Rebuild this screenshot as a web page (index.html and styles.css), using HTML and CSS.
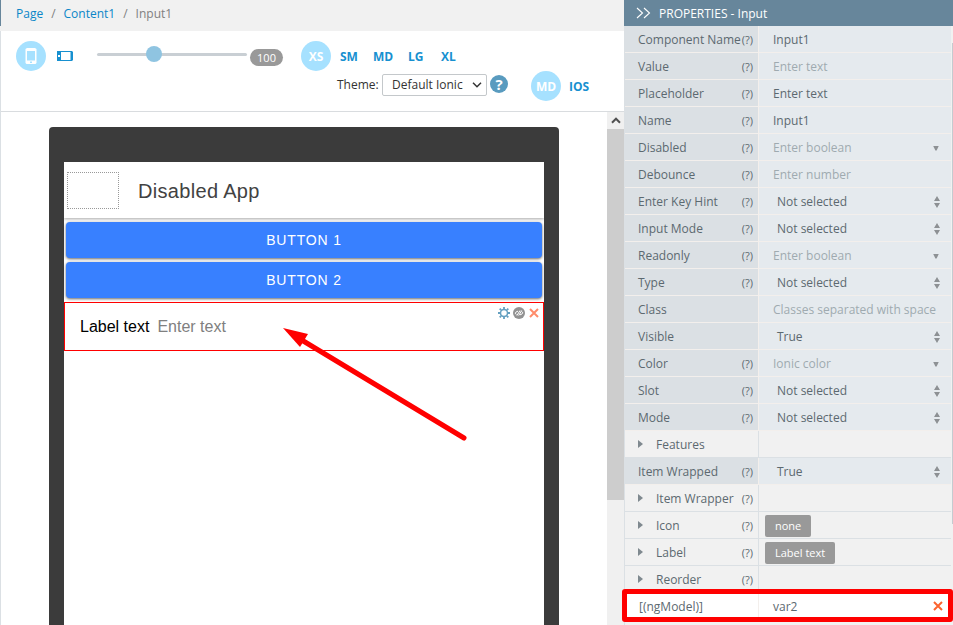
FILE: index.html
```html
<!DOCTYPE html>
<html lang="en">
<head>
    <meta charset="UTF-8">
    <meta name="viewport" content="width=device-width, initial-scale=1.0">
    <title>Input1</title>
    <link rel="stylesheet" href="styles.css">
</head>
<body>
    <div class="editor">
        <nav class="breadcrumb">
            <a href="#">Page</a><span class="sep">/</span><a href="#">Content1</a><span class="sep">/</span><span>Input1</span>
        </nav>
        <div class="toolbar">
            <div class="toolbar-row">
                <button class="circle">
                    <svg width="12" height="17" viewBox="0 0 12 17"><path fill="#fff" fill-rule="evenodd" d="M2 0h8l1.500 1v14l-1 1h-9l-1-1V1zM2 3v9.500h8v-9.500zM5 13.500v1.500h2v-1.500z"/></svg>
                </button>
                <button class="landscape">
                    <svg width="16" height="10" viewBox="0 0 16 10"><path fill="#1790d0" fill-rule="evenodd" d="M0 0h15l1 1v8l-1 1H0zM4 1v8h9.500V1zM1 4v2h2V4z"/></svg>
                </button>
                <div class="slider"><span class="thumb"></span></div>
                <span class="zoom-value">100</span>
                <button class="circle size-xs">XS</button>
                <div class="sizes"><span class="sm">SM</span><span class="md">MD</span><span class="lg">LG</span><span>XL</span></div>
            </div>
            <div class="toolbar-row theme-row">
                <label>Theme:</label>
                <div class="select">Default Ionic
                    <svg width="10" height="6" viewBox="0 0 10 6"><path d="M1 0.700l4 4 4-4" fill="none" stroke="#333" stroke-width="1.500"/></svg>
                </div>
                <span class="help">?</span>
                <button class="circle platform-md">MD</button>
                <span class="platform">IOS</span>
            </div>
        </div>
        <div class="workspace">
            <div class="stage">
                <div class="device">
                    <div class="screen">
                        <div class="app-header"><div class="slot"></div><span class="app-title">Disabled App</span></div>
                        <div class="app-content">
                            <div class="ion-button">BUTTON 1</div>
                            <div class="ion-button">BUTTON 2</div>
                            <div class="ion-item">
                                <span class="item-label">Label text</span><span class="item-input">Enter text</span>
                                <div class="item-tools">
                                    <svg width="12" height="12" viewBox="0 0 12 12"><g fill="none" stroke="#64a0c0"><circle cx="6" cy="6" r="3.500" stroke-width="1.500"/><path stroke-width="1.800" d="M6 0v2M6 10v2M0 6h2M10 6h2M1.700 1.700l1.500 1.500M8.800 8.800l1.500 1.500M10.300 1.700L8.800 3.200M3.200 8.800l-1.500 1.500"/></g></svg>
                                    <svg width="12" height="12" viewBox="0 0 12 12"><circle cx="6" cy="6" r="6" fill="#929292"/><path d="M5 4.200Q3 4.300 2.300 6.200q.3 1 1.200 1.500M7 7.800q2-.1 2.700-2-.3-1-1.200-1.500M4 8.500l3-5M5.700 8.500l3-5" fill="none" stroke="#fff" stroke-width="1"/></svg>
                                    <svg width="10" height="10" viewBox="0 0 10 10"><path d="M1 1l8 8M9 1L1 9" stroke="#ff8c6b" stroke-width="2"/></svg>
                                </div>
                            </div>
                        </div>
                    </div>
                </div>
            </div>
            <div class="scrollbar">
                <div class="scroll-up"><svg width="10" height="7" viewBox="0 0 10 7"><path d="M1 5.700l4-4 4 4" fill="none" stroke="#505050" stroke-width="2"/></svg></div>
                <div class="scroll-thumb"></div>
            </div>
        </div>
    </div>

    <aside class="properties">
        <div class="properties-header">
            <svg width="15" height="12" viewBox="0 0 15 12"><path d="M1 1l5.500 5L1 11M8 1l5.500 5L8 11" fill="none" stroke="#fff" stroke-width="1.100"/></svg>
            <span>PROPERTIES - Input</span>
        </div>
        <div class="properties-body">
            <div class="row"><div class="name">Component Name<i>(?)</i></div><div class="value">Input1</div></div>
            <div class="row"><div class="name">Value<i>(?)</i></div><div class="value empty">Enter text</div></div>
            <div class="row"><div class="name">Placeholder<i>(?)</i></div><div class="value">Enter text</div></div>
            <div class="row"><div class="name">Name<i>(?)</i></div><div class="value">Input1</div></div>
            <div class="row"><div class="name">Disabled<i>(?)</i></div><div class="value empty combo">Enter boolean</div></div>
            <div class="row"><div class="name">Debounce<i>(?)</i></div><div class="value empty">Enter number</div></div>
            <div class="row"><div class="name">Enter Key Hint<i>(?)</i></div><div class="value choice">Not selected</div></div>
            <div class="row"><div class="name">Input Mode<i>(?)</i></div><div class="value choice">Not selected</div></div>
            <div class="row"><div class="name">Readonly<i>(?)</i></div><div class="value empty combo">Enter boolean</div></div>
            <div class="row"><div class="name">Type<i>(?)</i></div><div class="value choice">Not selected</div></div>
            <div class="row"><div class="name">Class</div><div class="value empty">Classes separated with space</div></div>
            <div class="row"><div class="name">Visible</div><div class="value choice">True</div></div>
            <div class="row"><div class="name">Color<i>(?)</i></div><div class="value empty combo">Ionic color</div></div>
            <div class="row"><div class="name">Slot<i>(?)</i></div><div class="value choice">Not selected</div></div>
            <div class="row"><div class="name">Mode<i>(?)</i></div><div class="value choice">Not selected</div></div>
            <div class="row group"><div class="name">Features</div><div class="value"></div></div>
            <div class="row"><div class="name">Item Wrapped<i>(?)</i></div><div class="value choice">True</div></div>
            <div class="row group"><div class="name">Item Wrapper<i>(?)</i></div><div class="value"></div></div>
            <div class="row group"><div class="name">Icon<i>(?)</i></div><div class="value"><span class="tag">none</span></div></div>
            <div class="row group"><div class="name">Label<i>(?)</i></div><div class="value"><span class="tag">Label text</span></div></div>
            <div class="row group"><div class="name">Reorder<i>(?)</i></div><div class="value"></div></div>
            <div class="row binding"><div class="name">[(ngModel)]</div><div class="value">var2
                <svg width="10" height="10" viewBox="0 0 10 10"><path d="M1 1l8 8M9 1L1 9" stroke="#fb632f" stroke-width="2"/></svg>
            </div></div>
        </div>
        <div class="panel-scroll"></div>
    </aside>

    <svg class="arrow" width="186" height="118" viewBox="0 0 186 118">
        <path d="M17 11L181 110" stroke="#f00" stroke-width="5" stroke-linecap="round"/>
        <path d="M0 0L25 6L17 19Z" fill="#f00"/>
    </svg>
    <div class="highlight"></div>
</body>
</html>
```

FILE: styles.css
```css
* {
    box-sizing: border-box;
}
body {
    display: flex;
    height: 625px;
    margin: 0;
    overflow: hidden;
    font-family: "Open Sans", "Noto Sans", sans-serif;
    font-size: 12px;
    color: #5c6970;
    background: #fff;
}
button {
    padding: 0;
    border: 0;
    background: none;
    font: inherit;
}
svg {
    display: block;
    flex: none;
}

/* Editor */
.editor {
    width: 624px;
    height: 625px;
    display: flex;
    flex-direction: column;
    border-left: 1px solid #dbe0e4;
}
.breadcrumb {
    height: 31px;
    margin-left: -1px;
    padding: 0 16px;
    background: linear-gradient(#67869b, #67869b) 0 0 / 1px 26px no-repeat #f1f1f1;
    line-height: 27px;
    color: #808080;
}
.breadcrumb a {
    color: #0b86c8;
    text-decoration: none;
}
.sep {
    margin: 0 8px;
}
.toolbar {
    height: 81px;
    padding: 10px 15px 0;
    border-bottom: 1px solid #d9dcdf;
}
.toolbar-row {
    display: flex;
    align-items: center;
    height: 30px;
    font-weight: 700;
    color: #1790d0;
}
.circle {
    display: flex;
    align-items: center;
    justify-content: center;
    width: 30px;
    height: 30px;
    border-radius: 50%;
    background: #a6e1ff;
    color: #fff;
}
.landscape {
    margin: 0 24px 0 11px;
}
.slider {
    width: 150px;
    height: 3px;
    margin-bottom: 3px;
    border-radius: 2px;
    background: #c9cfd4;
}
.thumb {
    display: block;
    width: 16px;
    height: 16px;
    margin: -7px 0 0 49px;
    border-radius: 50%;
    background: #8fc4e1;
}
.zoom-value {
    width: 33px;
    height: 17px;
    margin: 3px 18px 0 3px;
    border-radius: 9px;
    background: #999;
    color: #fff;
    font-size: 11px;
    font-weight: 400;
    line-height: 18px;
    text-align: center;
}
.sizes {
    display: flex;
    margin-left: 9px;
}
.sizes span {
    width: 33px;
}
.sizes .md {
    width: 35px;
}
.theme-row {
    padding-left: 321px;
}
.theme-row label {
    width: 45px;
    margin-bottom: 3px;
    color: #333;
    font-weight: 400;
}
.select {
    display: flex;
    align-items: center;
    justify-content: space-between;
    width: 105px;
    height: 22px;
    margin: 0 3px 3px 0;
    padding: 0 4px 0 9px;
    border: 1px solid #c4c8cb;
    border-radius: 2px;
    color: #333;
    font-weight: 400;
    white-space: nowrap;
}
.help {
    width: 18px;
    height: 18px;
    margin: 0 23px 4px 0;
    border-radius: 50%;
    background: #599bbf;
    color: #fff;
    font-size: 15px;
    line-height: 18px;
    text-align: center;
}
.platform {
    margin-left: 8px;
}

/* Device preview */
.workspace {
    display: flex;
    flex: 1;
    min-height: 0;
}
.stage {
    width: 606px;
    padding: 15px 0 0 48px;
}
.device {
    width: 510px;
    height: 498px;
    padding: 35px 15px 0;
    border-radius: 4px 4px 0 0;
    background: #3b3b3b;
    font-family: "Liberation Sans", Arial, sans-serif;
}
.screen {
    height: 463px;
    background: #fff;
}
.app-header {
    display: flex;
    align-items: center;
    height: 56px;
    padding-left: 3px;
    box-shadow: 0 1px 3px rgba(0, 0, 0, 0.35);
    clip-path: inset(0 0 -4px 0);
    font-size: 20px;
    letter-spacing: 0.32px;
    color: #424242;
}
.slot {
    width: 52px;
    height: 37px;
    margin: 0 19px 0 0;
    border: 1px dotted #999;
}
.app-title {
    padding-top: 2px;
}
.app-content {
    padding-top: 4px;
}
.ion-button {
    height: 36px;
    margin: 0 2px 4px;
    border-radius: 4px;
    background: #3880ff;
    box-shadow: 0 1px 3px rgba(0, 0, 0, 0.6);
    color: #fff;
    font-size: 14px;
    letter-spacing: 0.84px;
    line-height: 37px;
    text-align: center;
}
.ion-item {
    display: flex;
    height: 49px;
    padding: 0 4px 0 15px;
    border: 1px solid #f00;
    background: #fff;
    font-size: 16px;
    line-height: 47px;
}
.item-label {
    margin-right: 8px;
    color: #000;
}
.item-input {
    color: #808080;
}
.item-tools {
    display: flex;
    align-items: center;
    gap: 4px;
    height: 12px;
    margin: 4px 0 0 auto;
}
.item-tools svg:first-child {
    margin-right: -1px;
}
.scrollbar {
    width: 17px;
    background: #f0f0f0;
}
.scroll-up {
    display: flex;
    align-items: center;
    justify-content: center;
    height: 17px;
}
.scroll-thumb {
    height: 371px;
    background: #cdcdcd;
}

/* Properties panel */
.properties {
    position: relative;
    width: 329px;
    height: 625px;
    background: #f1f1f1;
    border-left: 1px solid #dbe0e4;
}
.properties-header {
    display: flex;
    align-items: center;
    gap: 8px;
    height: 26px;
    margin-left: -1px;
    padding-left: 12px;
    background: #67869b;
    color: #fff;
}
.properties-body {
    width: 326px;
}
.row {
    display: flex;
    height: 27px;
    border-bottom: 1px solid #f3efec;
    background: #e5eaee;
    line-height: 27px;
    white-space: nowrap;
}
.name {
    display: flex;
    justify-content: space-between;
    width: 134px;
    padding: 0 5px 0 13px;
    border-right: 1px solid #f3efec;
    background: #dbe0e4;
}
.name i {
    font-size: 11px;
    font-style: normal;
    line-height: 27px;
}
.value {
    display: flex;
    align-items: center;
    flex: 1;
    padding-left: 14px;
}
.empty {
    color: #9faab0;
}
.choice {
    padding-left: 18px;
}
.combo::after,
.choice::after {
    content: "";
    width: 6px;
    height: 5px;
    margin: 2px 12px 0 auto;
    background: #8d9194;
    clip-path: polygon(0 0, 100% 0, 60% 100%, 40% 100%);
}
.choice::after {
    height: 12px;
    margin: 2px 11px 0 auto;
    clip-path: polygon(50% 0, 100% 42%, 100% 42%, 0 42%, 0 58%, 100% 58%, 50% 100%, 0 58%, 0 42%);
}
.group {
    border-color: #dbe0e4;
    background: #f1f1f1;
}
.group .name {
    justify-content: flex-start;
    background: #f1f1f1;
    border-color: #dbe0e4;
}
.group .name::before {
    content: "";
    width: 5px;
    height: 8px;
    margin: 9px 13px 0 0;
    background: #7f898f;
    clip-path: polygon(0 0, 100% 50%, 0 100%);
}
.group .name i {
    margin-left: auto;
}
.group .value {
    padding-left: 6px;
}
.tag {
    height: 22px;
    margin-top: 1px;
    padding: 0 10px;
    border-radius: 2px;
    background: #999;
    color: #fff;
    font-size: 11px;
    line-height: 22px;
}
.binding,
.binding .name {
    background: #fff;
}
.binding .name {
    padding-left: 14px;
}
.binding svg {
    margin: 0 8px 0 auto;
}
.panel-scroll {
    position: absolute;
    top: 43px;
    right: 0;
    width: 1px;
    height: 481px;
    background: #c5cbd0;
}

/* Annotations over the page */
.arrow {
    position: absolute;
    top: 328px;
    left: 283px;
}
.highlight {
    position: absolute;
    top: 589px;
    left: 622px;
    width: 331px;
    height: 33px;
    border: 5px solid #f00;
    border-radius: 3px;
}
```
